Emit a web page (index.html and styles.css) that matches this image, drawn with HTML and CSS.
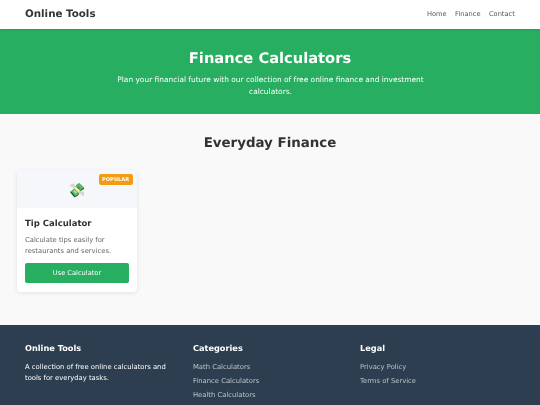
FILE: index.html
```html
<!DOCTYPE html>
<html lang="en">
<head>
<meta charset="utf-8">
<title>Finance Calculators</title>
<link rel="stylesheet" href="styles.css">
</head>
<body>
<header class="site-header">
  <div class="logo">Online Tools</div>
  <nav class="nav">
    <a href="#">Home</a>
    <a href="#">Finance</a>
    <a href="#">Contact</a>
  </nav>
</header>
<section class="hero">
  <h1>Finance Calculators</h1>
  <p>Plan your financial future with our collection of free online finance and investment calculators.</p>
</section>
<main class="main">
  <h2 class="section-title">Everyday Finance</h2>
  <div class="grid">
    <article class="card">
      <div class="card-media">
        <span class="badge"><span class="badge-text">POPULAR</span></span>
        <span class="emoji">💸</span>
      </div>
      <div class="card-body">
        <h3>Tip Calculator</h3>
        <p>Calculate tips easily for restaurants and services.</p>
        <a class="btn" href="#"><span class="btn-text">Use Calculator</span></a>
      </div>
    </article>
  </div>
</main>
<footer class="footer">
  <div class="footer-col">
    <h4>Online Tools</h4>
    <p>A collection of free online calculators and tools for everyday tasks.</p>
  </div>
  <div class="footer-col">
    <h4>Categories</h4>
    <ul>
      <li><a href="#">Math Calculators</a></li>
      <li><a href="#">Finance Calculators</a></li>
      <li><a href="#">Health Calculators</a></li>
    </ul>
  </div>
  <div class="footer-col">
    <h4>Legal</h4>
    <ul>
      <li><a href="#">Privacy Policy</a></li>
      <li><a href="#">Terms of Service</a></li>
    </ul>
  </div>
</footer>
</body>
</html>
```

FILE: styles.css
```css
* { box-sizing: border-box; margin: 0; padding: 0; }
html, body { height: 405px; overflow: hidden; }
body { font-family: "DejaVu Sans", sans-serif; background: #f9f9f9; color: #333; font-size: 8px; line-height: 1.6; text-rendering: geometricPrecision; }
a { text-decoration: none; color: inherit; }
.logo, .nav, .hero h1, .hero p, .section-title, .badge-text, .card-body h3, .card-body p, .btn-text, .footer h4, .footer p, .footer ul { will-change: transform; }
.badge-text, .btn-text { display: block; }
.site-header { height: 29px; background: #fff; box-shadow: 0 1px 2px rgba(0,0,0,.1); display: flex; justify-content: space-between; align-items: center; padding: 0 25px; position: relative; }
.logo { font-size: 10.3px; font-weight: 700; color: #333; }
.nav { display: flex; gap: 8.4px; font-size: 6.67px; color: #555; }
.hero { height: 85px; background: #27ae60; color: #fff; text-align: center; padding-top: 18px; }
.hero h1 { font-size: 14.67px; line-height: 24px; font-weight: 700; margin-bottom: 3px; }
.hero p { font-size: 7.45px; line-height: 12px; width: 333px; margin: 0 auto; }
.main { height: 211px; padding-top: 19px; }
.section-title { font-size: 13.4px; line-height: 21px; text-align: center; font-weight: 700; margin-bottom: 16px; color: #333; }
.grid { padding-left: 17px; }
.card { width: 120px; height: 122px; background: #fff; border-radius: 4px; overflow: hidden; box-shadow: 0 1px 4px rgba(0,0,0,.1); }
.card-media { height: 38px; background: #f5f7fa; display: flex; align-items: center; justify-content: center; position: relative; }
.emoji { font-size: 14px; line-height: 16px; padding-top: 3px; }
.badge { position: absolute; top: 4px; right: 4px; background: #f39c12; color: #fff; font-size: 5px; font-weight: 700; line-height: 10.5px; padding: 0.5px 3.4px 0; border-radius: 2px; letter-spacing: .1px; }
.card-body { padding: 9px 8px 0; }
.card-body h3 { font-size: 8.5px; line-height: 14px; font-weight: 700; margin-bottom: 3.5px; color: #333; }
.card-body p { font-size: 6.8px; line-height: 11.2px; color: #666; margin-bottom: 6.1px; }
.btn { display: block; height: 20px; line-height: 20px; background: #27ae60; color: #fff; text-align: center; font-size: 6.67px; border-radius: 2px; }
.footer { height: 80px; background: #2c3e50; color: #fff; display: grid; grid-template-columns: 167.5px 167.5px 1fr; padding: 16px 0 0 25px; overflow: hidden; }
.footer h4 { font-size: 8.2px; line-height: 14px; font-weight: 700; margin-bottom: 7px; }
.footer p { font-size: 6.8px; line-height: 11px; width: 145px; }
.footer ul { list-style: none; }
.footer li { font-size: 6.8px; line-height: 11.5px; margin-bottom: 2.6px; color: #bdc3c7; }
```
